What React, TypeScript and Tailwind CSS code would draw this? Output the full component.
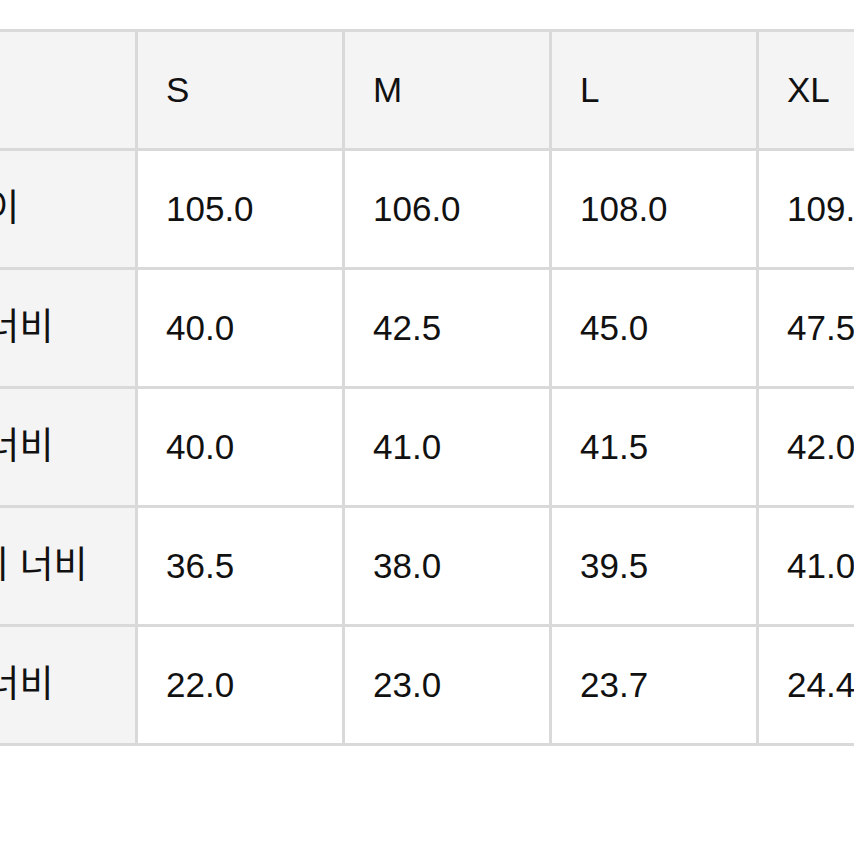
import React from "react";

const sizes = ["S", "M", "L", "XL"];

const rows: { label: string; values: string[] }[] = [
	{ label: "총 길이", values: ["105.0", "106.0", "108.0", "109.5"] },
	{ label: "허리 너비", values: ["40.0", "42.5", "45.0", "47.5"] },
	{ label: "엉덩 너비", values: ["40.0", "41.0", "41.5", "42.0"] },
	{ label: "허벅지 너비", values: ["36.5", "38.0", "39.5", "41.0"] },
	{ label: "밑단 너비", values: ["22.0", "23.0", "23.7", "24.4"] },
];

const cell = "flex items-center pl-[28px] h-[116px] whitespace-nowrap overflow-hidden";

const App = (): React.JSX.Element => {
	return (
		<div
			className="w-[854px] h-[854px] overflow-hidden bg-white text-[#111] text-[35px]"
			style={{ fontFamily: '"Liberation Sans", "Noto Sans CJK KR", sans-serif' }}
		>
			<div className="pt-[29px] ml-[-124px] w-max">
				<div className="grid grid-cols-[256px_204px_204px_204px_204px] gap-[3px] p-[3px] bg-[#d9d9d9]">
					{/* header */}
					<div className={`${cell} bg-[#f4f4f4]`}></div>
					{sizes.map((s) => (
						<div key={s} className={`${cell} bg-[#f4f4f4]`}>
							{s}
						</div>
					))}

					{rows.map((row) => (
						<React.Fragment key={row.label}>
							<div className={`${cell} bg-[#f4f4f4] text-[37px] pl-[26px]`}>{row.label}</div>
							{row.values.map((v, i) => (
								<div key={i} className={`${cell} bg-white`}>
									{v}
								</div>
							))}
						</React.Fragment>
					))}
				</div>
			</div>
		</div>
	);
};

export default App;
